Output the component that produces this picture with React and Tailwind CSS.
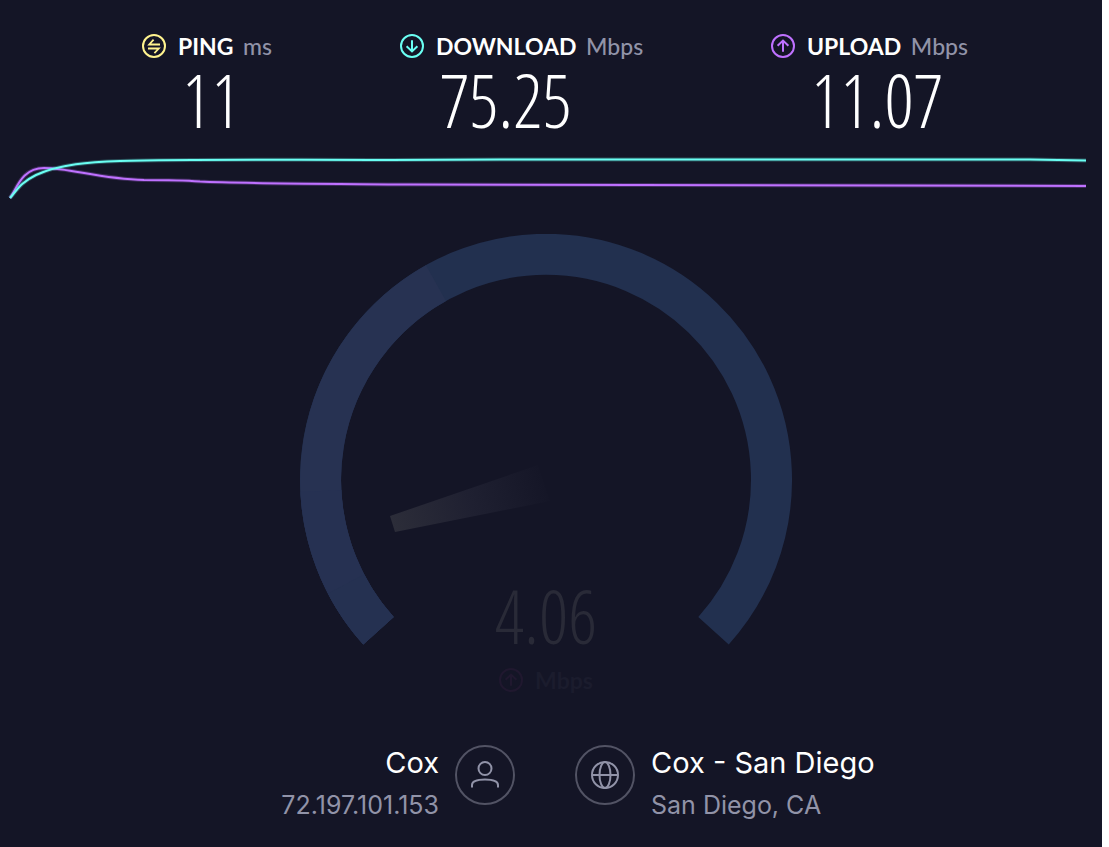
const digits = 'font-["Open_Sans_Condensed_Light","Open_Sans_Condensed",sans-serif] font-light';

function CircleIcon({ className, children }) {
  return (
    <svg
      viewBox="0 0 24 24"
      className={`size-6 shrink-0 ${className}`}
      fill="none"
      stroke="currentColor"
      strokeWidth="2"
      aria-hidden="true"
    >
      <circle cx="12" cy="12" r="11" />
      {children}
    </svg>
  );
}

const PingIcon = ({ className }) => (
  <CircleIcon className={className}>
    <path d="M18 10.5H7.2L11.6 5.6M6 14.5h10.800L12.400 19.200" strokeWidth="1.8" />
  </CircleIcon>
);

const DownIcon = ({ className }) => (
  <CircleIcon className={className}>
    <path d="M12 6.2v11M6.6 12.2l5.4 5.2 5.4-5.2" />
  </CircleIcon>
);

const UpIcon = ({ className }) => (
  <CircleIcon className={className}>
    <path d="M12 17.8v-11M6.6 11.8L12 6.6l5.4 5.2" />
  </CircleIcon>
);

function Metric({ icon, label, unit, value }) {
  return (
    <div className="grid grid-cols-[auto_auto] items-center gap-x-3">
      {icon}
      <h2 className="text-[23px] leading-7 font-bold whitespace-nowrap">
        {label} <span className="ml-1 font-medium text-[#9193a8]">{unit}</span>
      </h2>
      <p className={`col-start-2 pl-1 text-[73px] leading-20 ${digits}`}>{value}</p>
    </div>
  );
}

const uploadLine = 'M0 48C7 38 12 18 34 18C60 18 90 29 134 30C150 30 170 30 190 31.500C230 33.500 300 33.500 400 34.500C600 36 800 36 1076 36';
const downloadLine = 'M0 48C8 39 10 33 26 25C50 14 80 12 110 11C180 9 260 10 380 10C560 9 680 9 1020 9.500L1076 10.500';

function History() {
  return (
    <svg
      viewBox="0 0 1076 56"
      preserveAspectRatio="none"
      className="h-14 w-full overflow-visible"
      fill="none"
      role="img"
      aria-label="Speed history"
    >
      <g stroke="#bf71ff">
        <path d={uploadLine} strokeWidth="4" opacity="0.25" />
        <path d={uploadLine} strokeWidth="2" />
      </g>
      <g stroke="#6afff3">
        <path d={downloadLine} strokeWidth="4" opacity="0.25" />
        <path d={downloadLine} strokeWidth="2" />
      </g>
    </svg>
  );
}

function Gauge() {
  return (
    <div className="mx-auto grid w-[492px] max-w-full">
      <svg viewBox="0 0 492 460" className="col-start-1 row-start-1 w-full" aria-hidden="true">
        <defs>
          <linearGradient id="needle" gradientUnits="userSpaceOnUse" x1="92" y1="290" x2="250" y2="246">
            <stop offset="0" stopColor="#2c2d39" />
            <stop offset="0.5" stopColor="#1f2031" />
            <stop offset="1" stopColor="#141526" />
          </linearGradient>
        </defs>
        <g fill="none" strokeWidth="41">
          <path d="M78.500 396.800A225.500 225.500 0 1 1 413.500 396.800" stroke="#22304f" />
          <path d="M78.500 396.800A225.500 225.500 0 0 1 136 49.200" stroke="#273252" />
          <path d="M78.500 396.800A225.500 225.500 0 0 1 21 257" stroke="#263152" />
          <path d="M78.500 396.800A225.500 225.500 0 0 1 46 350" stroke="#253151" />
        </g>
        <path d="M90 282L238 231L250 267L95 298Z" fill="url(#needle)" />
      </svg>
      <div className="col-start-1 row-start-1 flex flex-col items-center self-end">
        <p className={`mb-[10px] text-[73px] leading-20 text-[#292a37] ${digits}`}>4.06</p>
        <p className="flex items-center gap-3 text-[23px] leading-7 font-bold text-[#1b1c2d]">
          <UpIcon className="text-[#20182f]" />
          Mbps
        </p>
      </div>
    </div>
  );
}

function Badge({ children }) {
  return (
    <span className="flex size-15 shrink-0 items-center justify-center rounded-full border-2 border-[#525364] text-[#9193a8]">
      {children}
    </span>
  );
}

export default function App() {
  return (
    <div className="min-h-screen bg-white pr-[7px] font-[Lato,sans-serif]">
      <main className="flex min-h-screen flex-col bg-[#141526] text-white">
        <header className="flex justify-between pt-8 pr-[134px] pl-[142px]">
          <Metric icon={<PingIcon className="text-[#fff38e]" />} label="PING" unit="ms" value="11" />
          <Metric icon={<DownIcon className="text-[#6afff3]" />} label="DOWNLOAD" unit="Mbps" value="75.25" />
          <Metric icon={<UpIcon className="text-[#bf71ff]" />} label="UPLOAD" unit="Mbps" value="11.07" />
        </header>

        <section className="mt-[10px] pr-4 pl-[10px]">
          <History />
        </section>

        <section className="mt-7 pr-[10px]">
          <Gauge />
        </section>

        <footer className="mt-[51px] grid grid-cols-2 gap-15 pr-3 font-[Inter,sans-serif]">
          <div className="flex justify-end gap-4 text-right">
            <div>
              <p className="text-[29px] leading-9">Cox</p>
              <p className="mt-2 text-[25px] leading-8 text-[#9193a8]">72.197.101.153</p>
            </div>
            <Badge>
              <svg viewBox="0 0 28 28" className="size-7" fill="none" stroke="currentColor" strokeWidth="2" aria-hidden="true">
                <circle cx="14" cy="7.500" r="6.500" />
                <path d="M1 26.500v-2.500C1 20 6 18.500 14 18.500s13 1.500 13 5.500v2.500" />
              </svg>
            </Badge>
          </div>
          <div className="flex gap-4">
            <Badge>
              <svg viewBox="0 0 28 28" className="size-7" fill="none" stroke="currentColor" strokeWidth="2" aria-hidden="true">
                <circle cx="14" cy="14" r="13" />
                <ellipse cx="14" cy="14" rx="5.500" ry="13" />
                <path d="M1 14h26" />
              </svg>
            </Badge>
            <div>
              <p className="text-[29px] leading-9">Cox - San Diego</p>
              <p className="mt-2 text-[25px] leading-8 text-[#9193a8]">San Diego, CA</p>
            </div>
          </div>
        </footer>
      </main>
    </div>
  );
}
